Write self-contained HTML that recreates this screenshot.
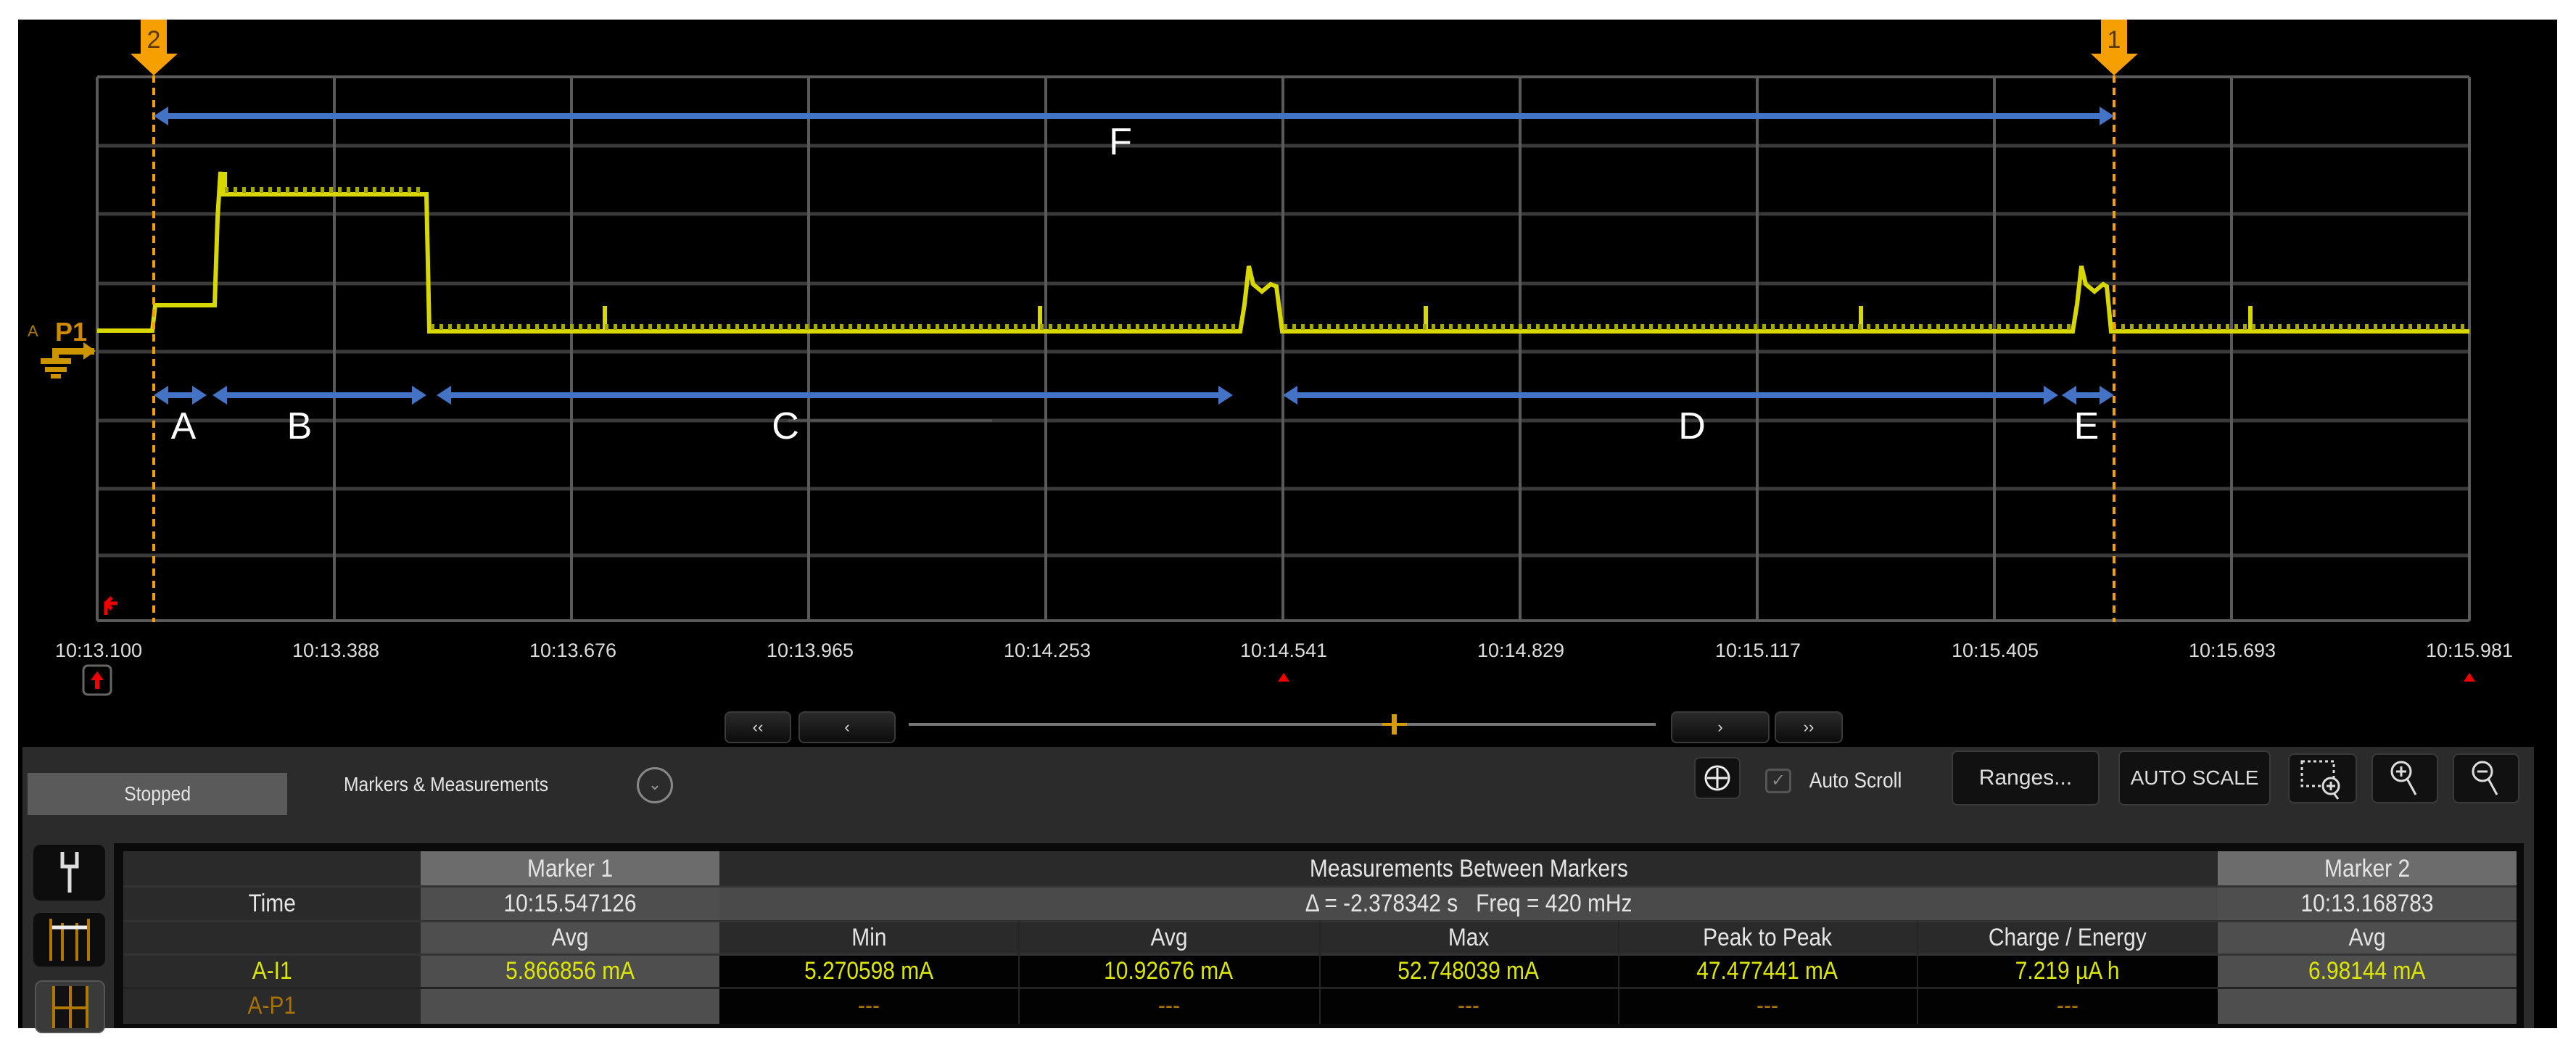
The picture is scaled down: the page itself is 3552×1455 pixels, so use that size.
<!DOCTYPE html>
<html><head><meta charset="utf-8"><style>
*{margin:0;padding:0;box-sizing:border-box}
body{width:3552px;height:1455px;background:#fff;position:relative;overflow:hidden;font-family:"Liberation Sans Narrow","Liberation Sans",sans-serif}
.a{position:absolute}
.c{position:absolute;display:flex;align-items:center;justify-content:center;color:#e4e4e4;font-size:34px;white-space:nowrap}
.c span{display:inline-block;transform:scaleX(0.88)}
.y{color:#dce600}
.o{color:#a87200}
.btn{position:absolute;background:linear-gradient(#2a2a2a,#0c0c0c);border:2px solid #3a3a3a;border-radius:8px;display:flex;align-items:center;justify-content:center;color:#ddd;font-size:28px}
</style></head><body>
<div class="a" style="left:25px;top:27px;width:3501px;height:1391px;background:#000"></div>
<svg class="a" style="left:0;top:0" width="3552" height="1455">
<g stroke="#3a3a3a" stroke-width="5">
<line x1="134" y1="201" x2="3405" y2="201"/><line x1="134" y1="295" x2="3405" y2="295"/>
<line x1="134" y1="391" x2="3405" y2="391"/><line x1="134" y1="485" x2="3405" y2="485"/>
<line x1="134" y1="580" x2="3405" y2="580"/><line x1="134" y1="674" x2="3405" y2="674"/>
<line x1="134" y1="766" x2="3405" y2="766"/>
</g>
<g stroke="#5a5a5a" stroke-width="4">
<line x1="134" y1="106" x2="3405" y2="106"/><line x1="134" y1="856" x2="3405" y2="856"/>
<line x1="134" y1="106" x2="134" y2="856"/><line x1="461" y1="106" x2="461" y2="856"/>
<line x1="788" y1="106" x2="788" y2="856"/><line x1="1115" y1="106" x2="1115" y2="856"/>
<line x1="1442" y1="106" x2="1442" y2="856"/><line x1="1769" y1="106" x2="1769" y2="856"/>
<line x1="2096" y1="106" x2="2096" y2="856"/><line x1="2423" y1="106" x2="2423" y2="856"/>
<line x1="2750" y1="106" x2="2750" y2="856"/><line x1="3077" y1="106" x2="3077" y2="856"/>
<line x1="3405" y1="106" x2="3405" y2="856"/>
</g>
<line x1="1087" y1="580" x2="1368" y2="580" stroke="#555" stroke-width="3"/>
<g fill="none" stroke="#d8d800" stroke-width="6">
<path d="M134 456 H210 L214 421 H296 L300 300 L304 237 L306 268 H588 L592 457 H1710 L1716 420 L1722 367 L1728 392 L1740 402 L1752 392 L1760 395 L1768 457 H2858 L2864 420 L2870 367 L2876 392 L2888 402 L2900 392 L2905 395 L2911 457 H3405"/>
<path d="M834 457 V422 M1434 457 V422 M1966 457 V422 M2566 457 V422 M3103 457 V422 M310 268 V237"/>
</g>
<g stroke="#a8a800" stroke-width="8" stroke-dasharray="5 7">
<line x1="594" y1="451" x2="1708" y2="451"/><line x1="1770" y1="451" x2="2856" y2="451"/><line x1="2913" y1="451" x2="3405" y2="451"/>
<line x1="310" y1="262" x2="586" y2="262"/>
</g>
<g stroke="#f5a000" stroke-width="4" stroke-dasharray="10 7">
<line x1="212" y1="104" x2="212" y2="858"/><line x1="2915" y1="104" x2="2915" y2="858"/>
</g>
<g fill="#f5a000">
<rect x="194" y="27" width="36" height="50"/><polygon points="180,74 245,74 212,104"/>
<rect x="2897" y="27" width="36" height="50"/><polygon points="2883,74 2948,74 2915,104"/>
</g>
<text x="212" y="66" fill="#5a3a00" font-size="34" text-anchor="middle" font-family="Liberation Sans">2</text>
<text x="2915" y="66" fill="#5a3a00" font-size="34" text-anchor="middle" font-family="Liberation Sans">1</text>
<g stroke="#4472c4" stroke-width="8">
<line x1="222" y1="160" x2="2905" y2="160"/>
<line x1="222" y1="545" x2="276" y2="545"/><line x1="302" y1="545" x2="578" y2="545"/>
<line x1="612" y1="545" x2="1690" y2="545"/><line x1="1778" y1="545" x2="2828" y2="545"/>
<line x1="2852" y1="545" x2="2906" y2="545"/>
</g>
<g fill="#4472c4">
<polygon points="212,160 232,147 232,173"/><polygon points="2915,160 2895,147 2895,173"/>
<polygon points="212,545 232,532 232,558"/><polygon points="285,545 265,532 265,558"/>
<polygon points="293,545 313,532 313,558"/><polygon points="588,545 568,532 568,558"/>
<polygon points="602,545 622,532 622,558"/><polygon points="1700,545 1680,532 1680,558"/>
<polygon points="1769,545 1789,532 1789,558"/><polygon points="2838,545 2818,532 2818,558"/>
<polygon points="2843,545 2863,532 2863,558"/><polygon points="2915,545 2895,532 2895,558"/>
</g>
<g fill="#fff" font-size="52" font-family="Liberation Sans" text-anchor="middle">
<text x="1545" y="213">F</text><text x="253" y="605">A</text><text x="413" y="605">B</text>
<text x="1083" y="605">C</text><text x="2333" y="605">D</text><text x="2877" y="605">E</text>
</g>
<text x="38" y="464" fill="#a87a00" font-size="22" font-family="Liberation Sans">A</text>
<text x="76" y="470" fill="#d08a00" font-size="36" font-weight="bold" font-family="Liberation Sans">P1</text>
<g fill="#cc9500"><rect x="72" y="480" width="58" height="9"/><polygon points="115,472 132,484 115,496"/><rect x="56" y="494" width="42" height="8"/><rect x="62" y="506" width="30" height="7"/><rect x="70" y="516" width="14" height="6"/><rect x="72" y="480" width="9" height="20"/></g>
<path d="M146 848 V832 H162 M146 832 l8 -8 M146 832 l8 8" stroke="#e00" stroke-width="5" fill="none"/>
<g fill="#ddd" font-size="27" text-anchor="middle" font-family="Liberation Sans">
<text x="136" y="906">10:13.100</text><text x="463" y="906">10:13.388</text><text x="790" y="906">10:13.676</text>
<text x="1117" y="906">10:13.965</text><text x="1444" y="906">10:14.253</text><text x="1770" y="906">10:14.541</text>
<text x="2097" y="906">10:14.829</text><text x="2424" y="906">10:15.117</text><text x="2751" y="906">10:15.405</text>
<text x="3078" y="906">10:15.693</text><text x="3405" y="906">10:15.981</text>
</g>
<rect x="115" y="918" width="38" height="40" rx="6" fill="#000" stroke="#666" stroke-width="3"/>
<path d="M134 926 l-9 12 h6 v12 h6 v-12 h6z" fill="#e00"/>
<polygon points="1770,928 1762,940 1778,940" fill="#e00"/>
<polygon points="3405,928 3397,940 3413,940" fill="#e00"/>
<line x1="1253" y1="999" x2="2283" y2="999" stroke="#777" stroke-width="4"/>
<rect x="1919" y="985" width="7" height="28" fill="#d89a00"/>
<line x1="1906" y1="999" x2="1940" y2="999" stroke="#d89a00" stroke-width="4"/>
</svg>
<div class="btn" style="left:999px;top:981px;width:92px;height:44px;font-size:22px">‹‹</div>
<div class="btn" style="left:1101px;top:981px;width:134px;height:44px;font-size:22px">‹</div>
<div class="btn" style="left:2304px;top:981px;width:136px;height:44px;font-size:22px">›</div>
<div class="btn" style="left:2447px;top:981px;width:94px;height:44px;font-size:22px">››</div>
<div class="a" style="left:31px;top:1030px;width:3463px;height:388px;background:#2b2b2b"></div>
<div class="c" style="left:38px;top:1066px;width:358px;height:58px;background:#5a5a5a;font-size:28px"><span>Stopped</span></div>
<div class="c" style="left:474px;top:1062px;height:40px;font-size:28px;justify-content:flex-start"><span style="transform-origin:left">Markers &amp; Measurements</span></div>
<div class="a" style="left:878px;top:1058px;width:50px;height:50px;border:3px solid #888;border-radius:50%;color:#999;font-size:22px;text-align:center;line-height:42px">⌄</div>
<div class="btn" style="left:2336px;top:1044px;width:64px;height:58px;background:#111"><svg width="40" height="40"><circle cx="20" cy="20" r="16" fill="none" stroke="#eee" stroke-width="3"/><path d="M20 6V34M6 20H34" stroke="#eee" stroke-width="3"/></svg></div>
<div class="a" style="left:2434px;top:1060px;width:36px;height:34px;border:3px solid #555;border-radius:6px;color:#888;font-size:24px;text-align:center;line-height:28px">✓</div>
<div class="c" style="left:2486px;top:1057px;height:40px;font-size:30px"><span>Auto Scroll</span></div>
<div class="btn" style="left:2691px;top:1035px;width:204px;height:76px;background:#111;font-size:30px">Ranges...</div>
<div class="btn" style="left:2921px;top:1035px;width:210px;height:76px;background:#111;font-size:28px">AUTO SCALE</div>
<div class="btn" style="left:3155px;top:1039px;width:95px;height:69px;background:#111"><svg width="70" height="60"><rect x="6" y="6" width="44" height="34" fill="none" stroke="#ddd" stroke-width="3" stroke-dasharray="4 4"/><circle cx="46" cy="40" r="11" fill="#111" stroke="#ddd" stroke-width="3"/><path d="M40 40H52M46 34V46M50 50L56 58" stroke="#ddd" stroke-width="3"/></svg></div>
<div class="btn" style="left:3270px;top:1039px;width:92px;height:69px;background:#111"><svg width="50" height="60"><circle cx="20" cy="20" r="13" fill="none" stroke="#ddd" stroke-width="3"/><path d="M13 20H27M20 13V27M28 30L40 52" stroke="#ddd" stroke-width="3"/></svg></div>
<div class="btn" style="left:3382px;top:1039px;width:92px;height:69px;background:#111"><svg width="50" height="60"><circle cx="20" cy="20" r="13" fill="none" stroke="#ddd" stroke-width="3"/><path d="M13 20H27M28 30L40 52" stroke="#ddd" stroke-width="3"/></svg></div>
<div class="a" style="left:46px;top:1165px;width:99px;height:77px;background:#0d0d0d;border-radius:10px"><svg width="99" height="77"><path d="M40 10V30H60V10M50 30V66" stroke="#ddd" stroke-width="5" fill="none"/></svg></div>
<div class="a" style="left:46px;top:1259px;width:99px;height:74px;background:#0d0d0d;border-radius:10px"><svg width="99" height="74"><path d="M24 8V66M76 8V66M40 14V66M60 14V66" stroke="#b07800" stroke-width="4"/><path d="M26 20H74" stroke="#eee" stroke-width="5"/></svg></div>
<div class="a" style="left:48px;top:1352px;width:97px;height:73px;background:#3a3a3a;border-radius:10px;border:2px solid #555"><svg width="93" height="69"><rect x="22" y="6" width="50" height="58" fill="#111"/><path d="M24 6V64M70 6V64M47 6V64M22 36H72" stroke="#b07800" stroke-width="4"/></svg></div>
<div class="a" style="left:157px;top:1163px;width:3323px;height:255px;background:#0a0a0a"></div>
<div class="a" style="left:170px;top:1174px;width:410px;height:238px;background:#2a2a2a"></div>
<div class="a" style="left:992px;top:1174px;width:2066px;height:48px;background:#2a2a2a"></div>
<div class="a" style="left:992px;top:1222px;width:2066px;height:48px;background:#4a4a4a"></div>
<div class="a" style="left:992px;top:1270px;width:2066px;height:46px;background:#2a2a2a"></div>
<div class="a" style="left:992px;top:1316px;width:2066px;height:96px;background:#020202"></div>
<div class="a" style="left:580px;top:1174px;width:412px;height:48px;background:#6c6c6c"></div>
<div class="a" style="left:580px;top:1222px;width:412px;height:190px;background:#4e4e4e"></div>
<div class="a" style="left:3058px;top:1174px;width:412px;height:48px;background:#6c6c6c"></div>
<div class="a" style="left:3058px;top:1222px;width:412px;height:190px;background:#4e4e4e"></div>
<div class="a" style="left:170px;top:1221px;width:3300px;height:3px;background:#333"></div>
<div class="a" style="left:170px;top:1269px;width:3300px;height:3px;background:#333"></div>
<div class="a" style="left:170px;top:1315px;width:3300px;height:3px;background:#333"></div>
<div class="a" style="left:170px;top:1361px;width:3300px;height:3px;background:#222"></div>
<div class="a" style="left:1404px;top:1270px;width:2px;height:142px;background:#252525"></div>
<div class="a" style="left:1819px;top:1270px;width:2px;height:142px;background:#252525"></div>
<div class="a" style="left:2231px;top:1270px;width:2px;height:142px;background:#252525"></div>
<div class="a" style="left:2643px;top:1270px;width:2px;height:142px;background:#252525"></div>

<div class="c" style="left:580px;top:1174px;width:412px;height:48px"><span>Marker 1</span></div>
<div class="c" style="left:992px;top:1174px;width:2066px;height:48px"><span>Measurements Between Markers</span></div>
<div class="c" style="left:3058px;top:1174px;width:412px;height:48px"><span>Marker 2</span></div>
<div class="c" style="left:170px;top:1222px;width:410px;height:48px"><span>Time</span></div>
<div class="c" style="left:580px;top:1222px;width:412px;height:48px"><span>10:15.547126</span></div>
<div class="c" style="left:992px;top:1222px;width:2066px;height:48px"><span>Δ = -2.378342 s&nbsp;&nbsp;&nbsp;Freq = 420 mHz</span></div>
<div class="c" style="left:3058px;top:1222px;width:412px;height:48px"><span>10:13.168783</span></div>
<div class="c" style="left:580px;top:1270px;width:412px;height:46px"><span>Avg</span></div>
<div class="c" style="left:992px;top:1270px;width:412px;height:46px"><span>Min</span></div>
<div class="c" style="left:1404px;top:1270px;width:415px;height:46px"><span>Avg</span></div>
<div class="c" style="left:1819px;top:1270px;width:412px;height:46px"><span>Max</span></div>
<div class="c" style="left:2231px;top:1270px;width:412px;height:46px"><span>Peak to Peak</span></div>
<div class="c" style="left:2643px;top:1270px;width:415px;height:46px"><span>Charge / Energy</span></div>
<div class="c" style="left:3058px;top:1270px;width:412px;height:46px"><span>Avg</span></div>
<div class="c y" style="left:170px;top:1316px;width:410px;height:46px"><span>A-I1</span></div>
<div class="c y" style="left:580px;top:1316px;width:412px;height:46px"><span>5.866856 mA</span></div>
<div class="c y" style="left:992px;top:1316px;width:412px;height:46px"><span>5.270598 mA</span></div>
<div class="c y" style="left:1404px;top:1316px;width:415px;height:46px"><span>10.92676 mA</span></div>
<div class="c y" style="left:1819px;top:1316px;width:412px;height:46px"><span>52.748039 mA</span></div>
<div class="c y" style="left:2231px;top:1316px;width:412px;height:46px"><span>47.477441 mA</span></div>
<div class="c y" style="left:2643px;top:1316px;width:415px;height:46px"><span>7.219 µA h</span></div>
<div class="c y" style="left:3058px;top:1316px;width:412px;height:46px"><span>6.98144 mA</span></div>
<div class="c o" style="left:170px;top:1362px;width:410px;height:50px"><span>A-P1</span></div>
<div class="c o" style="left:992px;top:1362px;width:412px;height:50px"><span>---</span></div>
<div class="c o" style="left:1404px;top:1362px;width:415px;height:50px"><span>---</span></div>
<div class="c o" style="left:1819px;top:1362px;width:412px;height:50px"><span>---</span></div>
<div class="c o" style="left:2231px;top:1362px;width:412px;height:50px"><span>---</span></div>
<div class="c o" style="left:2643px;top:1362px;width:415px;height:50px"><span>---</span></div>
</body></html>
